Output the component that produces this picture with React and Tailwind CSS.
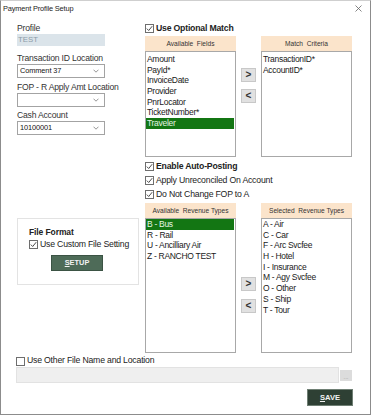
import React from "react";

const font = { fontFamily: '"Liberation Sans", Arial, sans-serif' };

function Check({ checked = true }) {
  return (
    <span className="inline-flex w-[9px] h-[9px] border border-[#6e6e6e] bg-white items-center justify-center shrink-0">
      {checked && (
        <svg width="7" height="7" viewBox="0 0 7 7">
          <path d="M0.8 3.6 L2.7 5.5 L6.2 1.2" fill="none" stroke="#3a3a3a" strokeWidth="0.9" />
        </svg>
      )}
    </span>
  );
}

function CheckRow({ label, bold, checked = true, h = "h-[13px]" }) {
  return (
    <div className={`flex items-center gap-[2px] ${h}`}>
      <Check checked={checked} />
      <span className={`text-[8.7px] tracking-[-0.2px] whitespace-nowrap text-[#222] ${bold ? "font-bold" : ""}`}>{label}</span>
    </div>
  );
}

function Select({ value }) {
  return (
    <div className="w-[88px] h-[14px] border border-[#a3a3a3] bg-white flex items-center justify-between pl-[2px] pr-[5px]">
      <span className="text-[7.4px] tracking-[-0.1px] text-[#111] whitespace-nowrap">{value}</span>
      <svg width="6" height="4" viewBox="0 0 6 4">
        <path d="M0.5 0.7 L3 3.2 L5.5 0.7" fill="none" stroke="#7a7a7a" strokeWidth="0.8" />
      </svg>
    </div>
  );
}

function ListBox({ title, items, selected, height, pad }) {
  return (
    <div className="w-[91px] flex flex-col">
      <div className="h-[15px] bg-[#fbe4cb] flex items-center justify-center text-[6.6px] text-[#333] whitespace-pre">
        {title}
      </div>
      <div className={`border border-[#a8a8a8] bg-white ${height} ${pad} pr-[1px]`}>
        {items.map((it) => (
          <div
            key={it}
            className={`h-[10.7px] leading-[10.7px] text-[8.5px] tracking-[-0.3px] pl-[1px] whitespace-nowrap ${
              it === selected ? "bg-[#137613] text-[#e4f4e4]" : "text-[#1a1a1a]"
            }`}
          >
            {it}
          </div>
        ))}
      </div>
    </div>
  );
}

function Arrows({ top, gap }) {
  return (
    <div className={`w-[25px] flex flex-col items-center ${top} ${gap}`}>
      <div className="w-[15px] h-[14px] bg-[#e1e1e1] border border-[#c8c8c8] flex items-center justify-center text-[10px] font-bold text-[#333] leading-none">&gt;</div>
      <div className="w-[15px] h-[14px] bg-[#e1e1e1] border border-[#c8c8c8] flex items-center justify-center text-[10px] font-bold text-[#333] leading-none">&lt;</div>
    </div>
  );
}

export default function App() {
  return (
    <div style={font} className="w-[371px] h-[415px] bg-white border border-[#8c8c8c] border-t-[#cfcfcf] flex flex-col overflow-hidden">
      <div className="h-[15px] flex items-center justify-between pl-[2px] pr-[8px]">
        <span className="text-[7.4px] tracking-[-0.15px] text-[#222]">Payment Profile Setup</span>
        <svg width="7" height="7" viewBox="0 0 7 7">
          <path d="M0.5 0.5 L6.5 6.5 M6.5 0.5 L0.5 6.5" stroke="#666" strokeWidth="0.8" />
        </svg>
      </div>

      <div className="flex pl-[15px] mt-[6px]">
        {/* left column */}
        <div className="w-[123px] flex flex-col">
          <div className="pl-[1px] text-[8.6px] tracking-[-0.2px] text-[#333] h-[12px] leading-[12px]">Profile</div>
          <div className="ml-[1px] w-[88px] h-[12px] bg-[#dbe4ea] text-[7.8px] text-[#8b9ba7] pl-[1px] leading-[12px]">TEST</div>
          <div className="pl-[1px] mt-[7px] text-[8.6px] tracking-[-0.2px] text-[#333] h-[11px] leading-[11px] whitespace-nowrap">Transaction ID Location</div>
          <div className="ml-[1px]"><Select value="Comment 37" /></div>
          <div className="pl-[1px] mt-[4px] text-[8.6px] tracking-[-0.2px] text-[#333] h-[11px] leading-[11px] whitespace-nowrap">FOP - R Apply Amt Location</div>
          <div className="ml-[1px]"><Select value="" /></div>
          <div className="pl-[1px] mt-[3px] text-[8.6px] tracking-[-0.2px] text-[#333] h-[11px] leading-[11px] whitespace-nowrap">Cash Account</div>
          <div className="ml-[1px]"><Select value="10100001" /></div>

          <div className="mt-[83px] ml-[1px] w-[122px] h-[67px] border border-[#e3e3e3] pl-[11px] pt-[8px] flex flex-col">
            <div className="text-[8.5px] tracking-[-0.1px] font-bold text-[#222] h-[10px] leading-[10px]">File Format</div>
            <div className="mt-[2px]"><CheckRow label="Use Custom File Setting" h="h-[11px]" /></div>
            <div className="ml-[22px] mt-[5px] w-[52px] h-[16px] bg-[#4e6b58] border border-[#3b5344] flex items-center justify-center text-[7.4px] font-bold text-[#f2f2f2]">
              <span><span className="underline">S</span>ETUP</span>
            </div>
          </div>
        </div>

        {/* right column */}
        <div className="ml-[6px] w-[207px] flex flex-col">
          <CheckRow label="Use Optional Match" bold />
          <div className="flex mt-[1px]">
            <ListBox
              title="Available  Fields"
              items={["Amount", "PayId*", "InvoiceDate", "Provider", "PnrLocator", "TicketNumber*", "Traveler"]}
              selected="Traveler"
              height="h-[106px]"
              pad="pt-[2px]"
            />
            <Arrows top="pt-[32px]" gap="gap-[7px]" />
            <ListBox title="Match  Criteria" items={["TransactionID*", "AccountID*"]} height="h-[106px]" pad="pt-[2px]" />
          </div>
          <div className="mt-[3px] flex flex-col gap-[1px]">
            <CheckRow label="Enable Auto-Posting" bold />
            <CheckRow label="Apply Unreconciled On Account" />
            <CheckRow label="Do Not Change FOP to A" />
          </div>
          <div className="flex mt-[2px]">
            <ListBox
              title="Available  Revenue Types"
              items={["B - Bus", "R - Rail", "U - Ancilliary Air", "Z - RANCHO TEST"]}
              selected="B - Bus"
              height="h-[135px]"
              pad="pt-0"
            />
            <Arrows top="pt-[74px]" gap="gap-[8px]" />
            <ListBox
              title="Selected  Revenue Types"
              items={["A - Air", "C - Car", "F - Arc Svcfee", "H - Hotel", "I - Insurance", "M - Agy Svcfee", "O - Other", "S - Ship", "T - Tour"]}
              height="h-[135px]"
              pad="pt-0"
            />
          </div>
        </div>
      </div>

      <div className="pl-[15px] mt-[2px]">
        <CheckRow label="Use Other File Name and Location" checked={false} h="h-[12px]" />
        <div className="flex items-center">
          <div className="w-[323px] h-[16px] bg-[#efefef] border border-[#e2e2e2]" />
          <div className="ml-[1px] w-[12px] h-[11px] bg-[#dcdcdc] text-[6px] text-[#9a9a9a] flex items-end justify-center leading-none pb-[1px]">...</div>
        </div>
        <div className="flex justify-end pr-[17px] mt-[6px]">
          <div className="w-[46px] h-[17px] bg-[#2e4034] border border-[#6f7f74] flex items-center justify-center text-[7.6px] font-bold text-[#f2f2f2]">
            <span><span className="underline">S</span>AVE</span>
          </div>
        </div>
      </div>
    </div>
  );
}
